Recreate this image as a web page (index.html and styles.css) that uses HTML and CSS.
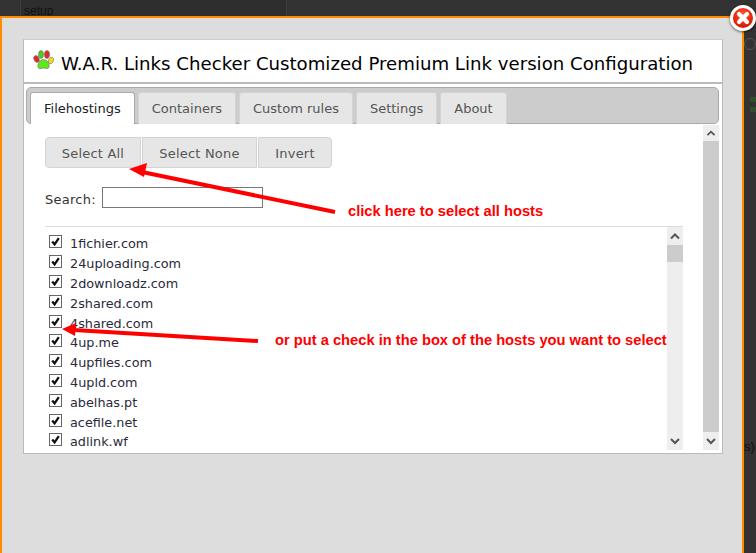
FILE: index.html
```html
<!DOCTYPE html>
<html lang="en">
<head>
    <meta charset="UTF-8">
    <title>W.A.R. Links Checker Configuration</title>
    <link rel="stylesheet" href="styles.css">
</head>
<body>
    <svg class="defs" width="0" height="0">
        <symbol id="tick" viewBox="0 0 13 13">
            <path d="M3.2 6.5 L5.6 9.4 L9.8 3.2" fill="none" stroke="#111" stroke-width="2.3"/>
        </symbol>
        <symbol id="up" viewBox="0 0 16 18">
            <path d="M4 11.5 L8 7.5 L12 11.5" fill="none" stroke="#555" stroke-width="2"/>
        </symbol>
        <symbol id="down" viewBox="0 0 16 18">
            <path d="M4 7 L8 11 L12 7" fill="none" stroke="#555" stroke-width="2"/>
        </symbol>
    </svg>

    <div class="behind">
        <div class="behind-tab">setup</div>
    </div>

    <div class="behind-side">
        <div class="side-circle"></div>
        <div class="side-mark"></div>
        <div class="side-mark"></div>
        <div class="side-text">s)</div>
    </div>

    <div class="modal">
        <div class="panel">
            <div class="title">
                <svg class="paw" width="22" height="24" viewBox="0 0 22 24">
                    <ellipse cx="4.5" cy="10" rx="2.6" ry="3.6" fill="#e8262a" stroke="#777" stroke-width=".6" transform="rotate(-25 4.5 10)"/>
                    <ellipse cx="9" cy="5.5" rx="2.6" ry="4" fill="#46d01e" stroke="#777" stroke-width=".6"/>
                    <ellipse cx="15" cy="5.5" rx="2.6" ry="4" fill="#e8262a" stroke="#777" stroke-width=".6"/>
                    <ellipse cx="19" cy="11.5" rx="2.4" ry="3.4" fill="#f4dc1c" stroke="#777" stroke-width=".6" transform="rotate(25 19 11.5)"/>
                    <path d="M11.5 10.5 C15 10.5 18 15 17 18 C16.4 20 14 19.5 11.5 19 C9 19.5 6.5 20.5 6 18 C5.4 15 8 10.5 11.5 10.5 Z" fill="#5fe81a" stroke="#666" stroke-width=".6"/>
                </svg>
                <span>W.A.R. Links Checker Customized Premium Link version Configuration</span>
            </div>

            <div class="tabs-widget">
                <div class="tab-bar">
                    <div class="tab active">Filehostings</div>
                    <div class="tab">Containers</div>
                    <div class="tab">Custom rules</div>
                    <div class="tab">Settings</div>
                    <div class="tab">About</div>
                </div>

                <div class="tab-body">
                    <div class="tab-content">
                        <div class="buttons">
                            <div class="btn btn-all">Select All</div>
                            <div class="btn btn-none">Select None</div>
                            <div class="btn btn-invert">Invert</div>
                        </div>
                        <div class="search">
                            <label>Search:</label>
                            <div class="search-input"></div>
                        </div>
                        <div class="host-box">
                            <ul class="hosts">
                                <li><span class="check"><svg width="13" height="13"><use href="#tick"/></svg></span>1fichier.com</li>
                                <li><span class="check"><svg width="13" height="13"><use href="#tick"/></svg></span>24uploading.com</li>
                                <li><span class="check"><svg width="13" height="13"><use href="#tick"/></svg></span>2downloadz.com</li>
                                <li><span class="check"><svg width="13" height="13"><use href="#tick"/></svg></span>2shared.com</li>
                                <li><span class="check"><svg width="13" height="13"><use href="#tick"/></svg></span>4shared.com</li>
                                <li><span class="check"><svg width="13" height="13"><use href="#tick"/></svg></span>4up.me</li>
                                <li><span class="check"><svg width="13" height="13"><use href="#tick"/></svg></span>4upfiles.com</li>
                                <li><span class="check"><svg width="13" height="13"><use href="#tick"/></svg></span>4upld.com</li>
                                <li><span class="check"><svg width="13" height="13"><use href="#tick"/></svg></span>abelhas.pt</li>
                                <li><span class="check"><svg width="13" height="13"><use href="#tick"/></svg></span>acefile.net</li>
                                <li><span class="check"><svg width="13" height="13"><use href="#tick"/></svg></span>adlink.wf</li>
                            </ul>
                            <div class="scrollbar">
                                <svg class="arrow" width="16" height="18"><use href="#up"/></svg>
                                <div class="track"><div class="thumb-small"></div></div>
                                <svg class="arrow" width="16" height="18"><use href="#down"/></svg>
                            </div>
                        </div>
                    </div>
                    <div class="scrollbar scrollbar-outer">
                        <svg class="arrow" width="16" height="16"><use href="#up"/></svg>
                        <div class="track track-full"></div>
                        <svg class="arrow" width="16" height="18"><use href="#down"/></svg>
                    </div>
                </div>
            </div>
        </div>
    </div>

    <!-- annotations drawn over the screenshot -->
    <svg class="arrows" width="756" height="553" viewBox="0 0 756 553">
        <path d="M335 212 L142 172" stroke="#f00" stroke-width="4" fill="none"/>
        <path d="M129 169 L147 163 L144 177 Z" fill="#f00"/>
        <path d="M258 341 L74 330" stroke="#f00" stroke-width="4" fill="none"/>
        <path d="M62 329 L76 323 L75 336 Z" fill="#f00"/>
    </svg>
    <div class="note note-all">click here to select all hosts</div>
    <div class="note note-check">or put a check in the box of the hosts you want to select</div>

    <div class="close">
        <svg width="20" height="20" viewBox="0 0 20 20">
            <path d="M6 6 L14 14 M14 6 L6 14" stroke="#fff" stroke-width="4.2" stroke-linecap="round"/>
        </svg>
    </div>
</body>
</html>
```

FILE: styles.css
```css
html, body {
    margin: 0;
    height: 553px;
    overflow: hidden;
}
body {
    position: relative;
    background: #333;
    font-family: "DejaVu Sans", sans-serif;
    font-size: 13px;
    color: #333;
}
.defs {
    position: absolute;
}
.behind {
    height: 16px;
    padding-left: 20px;
    overflow: hidden;
}
.behind-tab {
    width: 267px;
    height: 30px;
    box-sizing: border-box;
    padding: 4px 3px;
    background: #2e2e2e;
    border: 1px solid #3c3c3c;
    border-top: 0;
    font-family: "Liberation Sans", sans-serif;
    font-size: 12px;
    color: #111;
}
.behind-side {
    position: absolute;
    left: 744px;
    top: 0;
    width: 12px;
    height: 553px;
    overflow: hidden;
    padding-top: 38px;
    box-sizing: border-box;
}
.side-circle {
    width: 12px;
    height: 12px;
    box-sizing: border-box;
    border: 1px solid #555;
    border-radius: 50%;
}
.side-mark {
    width: 6px;
    height: 5px;
    margin: 47px 0 -42px 6px;
    background: #2f4f2a;
}
.side-text {
    margin-top: 369px;
    font-family: "Liberation Sans", sans-serif;
    font-size: 13px;
    color: #111;
}
.modal {
    position: relative;
    width: 744px;
    height: 537px;
    box-sizing: border-box;
    background: #ddd;
    border: 2px solid #ff8c00;
    border-bottom: 0;
    padding: 21px 19px 0 21px;
}
.panel {
    background: #fff;
    border: 1px solid #bbb;
    border-top-color: #ccc;
    height: 415px;
    box-sizing: border-box;
}
.title {
    display: flex;
    align-items: center;
    height: 44px;
    box-sizing: border-box;
    padding: 5px 0 0 8px;
    border-bottom: 2px solid #bbb;
    font-size: 18.15px;
    color: #000;
}
.paw {
    margin-right: 7px;
    margin-top: -5px;
}
.tabs-widget {
    padding: 3px 3px 0 2px;
}
.tab-bar {
    display: flex;
    gap: 3px;
    height: 37px;
    box-sizing: border-box;
    padding: 4px 3px 0;
    background: #ccc;
    border: 1px solid #aaa;
    border-radius: 5px;
}
.tab {
    height: 32px;
    box-sizing: border-box;
    padding: 8px 13px 0;
    background: #e6e6e6;
    border: 1px solid #d3d3d3;
    border-bottom: 0;
    border-radius: 3px 3px 0 0;
    color: #555;
}
.tab.active {
    background: #fff;
    border-color: #aaa;
    color: #212121;
}
.tab-body {
    display: flex;
    justify-content: space-between;
    padding-left: 19px;
}
.tab-content {
    width: 638px;
    padding-top: 13px;
}
.buttons {
    display: flex;
    gap: 1px;
}
.btn {
    height: 31px;
    box-sizing: border-box;
    padding-top: 8px;
    text-align: center;
    letter-spacing: 0.2px;
    background: #e6e6e6;
    border: 1px solid #d3d3d3;
    color: #555;
}
.btn-all {
    width: 96px;
    border-radius: 4px 0 0 4px;
}
.btn-none {
    width: 115px;
}
.btn-invert {
    width: 74px;
    border-radius: 0 4px 4px 0;
}
.search {
    display: flex;
    align-items: flex-end;
    gap: 6px;
    margin-top: 19px;
    letter-spacing: 0.25px;
}
.search label {
    padding-bottom: 1px;
}
.search-input {
    width: 161px;
    height: 21px;
    box-sizing: border-box;
    border: 1px solid #777;
}
.host-box {
    display: flex;
    justify-content: space-between;
    height: 224px;
    box-sizing: border-box;
    margin-top: 18px;
    border-top: 1px solid #ddd;
    overflow: hidden;
}
.hosts {
    list-style: none;
    margin: 0;
    padding: 7px 0 0 4px;
}
.hosts li {
    display: flex;
    align-items: center;
    height: 19.8px;
    font-size: 12.8px;
    color: #2a2a3a;
}
.check {
    display: block;
    width: 13px;
    height: 13px;
    box-sizing: border-box;
    margin-right: 8px;
    margin-top: -4px;
    border: 1px solid #666;
    background: #fff;
}
.check svg {
    display: block;
    margin: -1px;
}
.scrollbar {
    display: flex;
    flex-direction: column;
    width: 16px;
    background: #eee;
}
.arrow {
    display: block;
    flex: none;
}
.track {
    flex: 1;
}
.thumb-small {
    height: 17px;
    background: #ccc;
}
.scrollbar-outer {
    height: 325px;
    margin-top: 1px;
}
.track-full {
    background: #ccc;
}
.arrows {
    position: absolute;
    left: 0;
    top: 0;
}
.note {
    position: absolute;
    font-family: "Liberation Sans", sans-serif;
    font-size: 14.7px;
    font-weight: bold;
    color: #f00;
    white-space: nowrap;
}
.note-all {
    left: 348px;
    top: 203px;
}
.note-check {
    left: 275px;
    top: 332px;
}
.close {
    position: absolute;
    left: 730px;
    top: 5px;
    width: 20px;
    height: 20px;
    border-radius: 50%;
    background: radial-gradient(circle at 50% 35%, #ff5a3c, #e01a00 70%);
    border: 3px solid #fff;
    box-shadow: 0 1px 3px rgba(0, 0, 0, 0.6);
}
.close svg {
    display: block;
}
```
